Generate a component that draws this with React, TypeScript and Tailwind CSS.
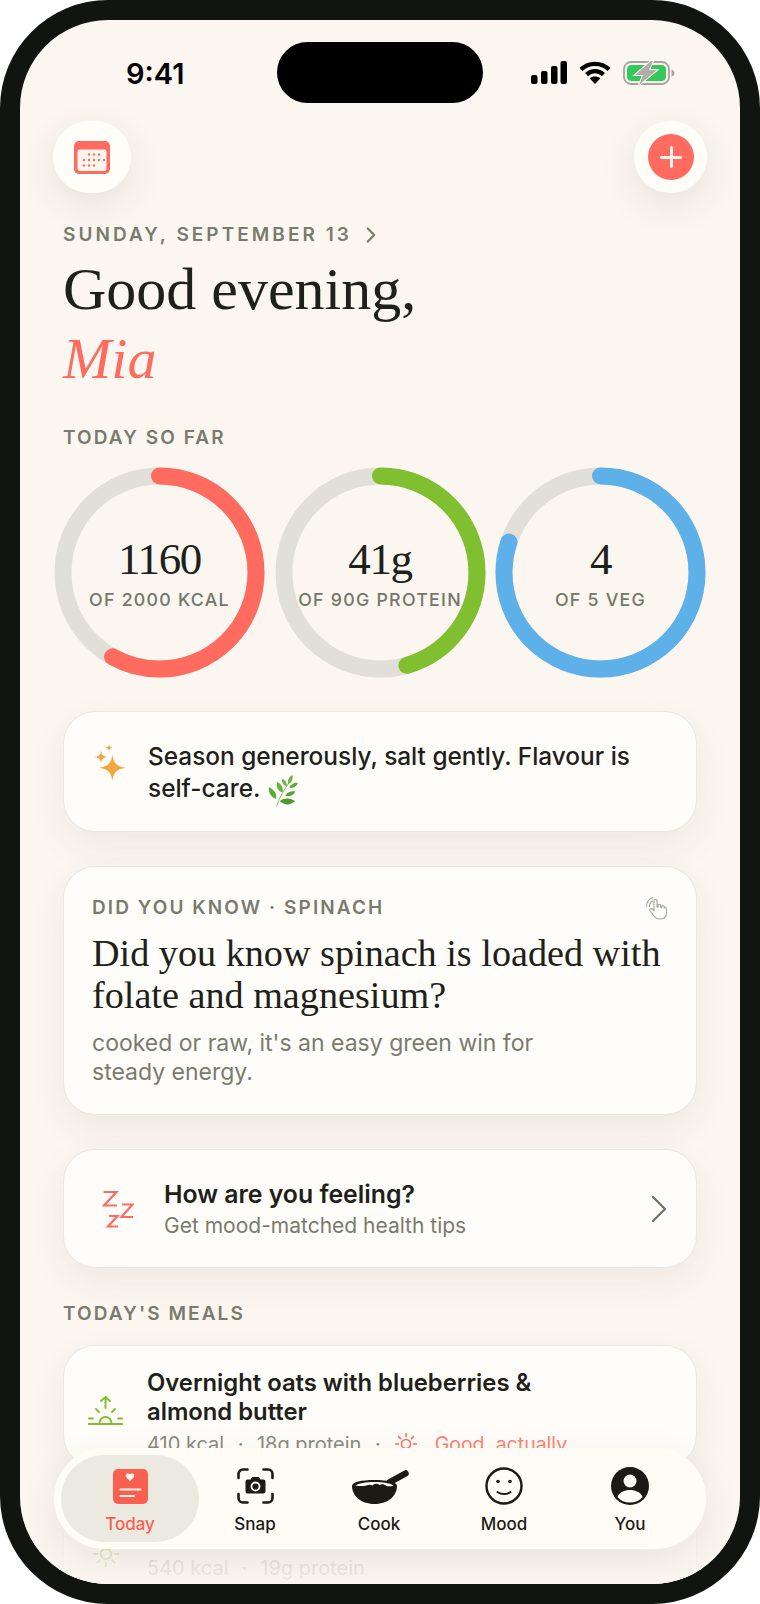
import React from 'react';
import { ChevronRight } from 'lucide-react';

const sans = 'font-["Inter","Liberation_Sans",sans-serif]';
const serif = 'font-["Liberation_Serif",serif]';

const rings = [
  { value: '1160', label: 'OF 2000 KCAL', pct: 0.58, color: '#FF6B5E' },
  { value: '41g', label: 'OF 90G PROTEIN', pct: 0.455, color: '#80BF2F' },
  { value: '4', label: 'OF 5 VEG', pct: 0.8, color: '#5EB0E9' },
];

function Ring({ value, label, pct, color }: { value: string; label: string; pct: number; color: string }) {
  const r = 96.5;
  const c = 2 * Math.PI * r;
  return (
    <div className="grid h-[211px] w-[211px] place-items-center [&>*]:[grid-area:1/1]">
      <svg width="211" height="211" viewBox="0 0 211 211" className="-rotate-90">
        <circle cx="105.5" cy="105.5" r={r} fill="none" stroke="#E2DFD8" strokeWidth="17" />
        <circle cx="105.5" cy="105.5" r={r} fill="none" stroke={color} strokeWidth="17" strokeLinecap="round" strokeDasharray={`${c * pct} ${c}`} />
      </svg>
      <div className="flex flex-col items-center pb-[1px]">
        <span className="font-['Liberation_Serif',serif] text-[45px] leading-[52px] tracking-[-0.03em] text-[#1E211A]">{value}</span>
        <span className="mt-[4px] text-[17.8px] leading-[22px] font-medium tracking-[0.07em] whitespace-nowrap text-[#74766A]">{label}</span>
      </div>
    </div>
  );
}

function SignalIcon() {
  return (
    <svg width="36" height="23" viewBox="0 0 36 23" fill="#000">
      <rect x="0" y="14" width="6.5" height="9" rx="2" />
      <rect x="10" y="10" width="6.5" height="13" rx="2" />
      <rect x="20" y="5" width="6.5" height="18" rx="2" />
      <rect x="29.5" y="0" width="6.5" height="23" rx="2" />
    </svg>
  );
}

function WifiIcon() {
  return (
    <svg width="32" height="23" viewBox="0 0 32 23" fill="none" stroke="#000" strokeWidth="4.4">
      <path d="M2 8.5C9.8 1 22.2 1 30 8.5" />
      <path d="M7.6 13.6C12.4 9 19.6 9 24.4 13.6" />
      <path d="M16 23l-5.4-5.8c3.1-2.4 7.7-2.4 10.8 0z" fill="#000" stroke="none" />
    </svg>
  );
}

function BatteryIcon() {
  return (
    <svg width="52" height="24" viewBox="0 0 52 24">
      <rect x="1" y="1" width="45" height="22" rx="7" fill="none" stroke="#A5A5A0" strokeWidth="1.8" />
      <rect x="4" y="4" width="39" height="16" rx="4.5" fill="#34C759" />
      <path d="M48.5 8.5c2 .5 3 2 3 3.500s-1 3-3 3.500z" fill="#A5A5A0" />
      <path d="M28 0 12 14h8l-4 10 18-15h-8l4-9z" fill="#B1AEA6" stroke="#FBF6F0" strokeWidth="2" paintOrder="stroke" />
    </svg>
  );
}

function CalendarIcon() {
  const dots = [
    [15, 13.5], [20, 13.5], [25, 13.5], [10, 19], [15, 19], [20, 19], [25, 19], [30, 19], [10, 24.5], [15, 24.5], [20, 24.5],
  ];
  return (
    <svg width="36" height="33" viewBox="0 0 36 33">
      <rect width="36" height="33" rx="5" fill="#FF6B5E" />
      <rect x="3.5" y="8.5" width="29" height="21.5" rx="2.5" fill="#FFF6F0" />
      {dots.map(([x, y]) => (
        <circle key={`${x}-${y}`} cx={x} cy={y} r="1.2" fill="#FF6B5E" />
      ))}
    </svg>
  );
}

function Sparkles() {
  return (
    <svg width="32" height="38" viewBox="0 0 32 38" fill="#F2A83C" className="-mt-[20px] shrink-0">
      <path d="M18.400 11.500c.9 8 3.800 11.800 13 13.200-9.200 1.400-12.100 5.200-13 13.300-.9-8.100-3.800-11.900-13-13.300 9.200-1.400 12.100-5.200 13-13.200z" />
      <path d="M7 7.500c.4 4 1.600 5.800 6.500 6.500-4.900.7-6.100 2.500-6.500 6.500-.4-4-1.600-5.800-6.500-6.500 4.900-.7 6.100-2.500 6.500-6.500z" />
      <path d="M15 1c.2 2.200 1 3.200 3.500 3.700-2.500.5-3.300 1.500-3.500 3.800-.2-2.300-1-3.300-3.500-3.800 2.500-.5 3.300-1.500 3.500-3.700z" />
    </svg>
  );
}

function HerbIcon() {
  return (
    <svg width="31" height="33" viewBox="44 0 94 100" className="-my-[6px] ml-[1px] inline-block align-[-4px]">
      <path d="M70 98C78 70 95 45 112 20" fill="none" stroke="#8DB765" strokeWidth="3" />
      <path d="M68 76C50 68 44 52 47 40c15 6 25 20 21 36z" fill="#5FAB38" />
      <path d="M88 56C72 50 68 36 72 24c12 6 20 18 16 32z" fill="#67B23E" />
      <path d="M100 38C88 32 84 22 88 14c10 6 15 14 12 24z" fill="#70B845" />
      <path d="M106 30c-4-10 2-22 12-27 3 11-2 22-12 27z" fill="#6AB240" />
      <path d="M108 42c6-12 17-17 27-15-5 11-15 17-27 15z" fill="#5FAB38" />
      <path d="M96 66c6-12 19-16 31-13-5 12-19 17-31 13z" fill="#57A233" />
      <path d="M80 82c12-10 30-10 46 0-14 14-32 14-46 0z" fill="#4E9A2C" />
    </svg>
  );
}

function TapIcon() {
  return (
    <svg width="24" height="24" viewBox="0 0 24 24" fill="none" stroke="#A3A49B" strokeWidth="1.1" strokeLinecap="round" strokeLinejoin="round" className="-mr-[2px]">
      <path d="M1.500 10.500C1.500 6 4.500 2.500 8 1.500" />
      <path d="M4.500 10.500C4.500 8 6 6 7.800 5" />
      <path d="M9 15V4.800c0-2 3-2 3 0V11l1 .1V9.500c0-1.500 2.700-1.500 2.700 0v2l1 .2v-1c0-1.400 2.600-1.400 2.600 0v1.200c.7-.9 2.200-.4 2.200 1v3.500c0 4-2.500 6.600-6.500 6.600-3 0-4.500-1-6-3l-4-5c-1-1.600 1-3.200 2.500-1.800z" />
    </svg>
  );
}

function ZzzIcon() {
  return (
    <svg width="32" height="38" viewBox="0 0 32 38" fill="none" stroke="#FF6B5E" strokeWidth="2.2" className="shrink-0">
      <path d="M1.500 2h13L2 15.500h13" />
      <path d="M20 14.500h10.500L19.500 27H31" />
      <path d="M7 26h8.500L6 36.500h10" />
    </svg>
  );
}

function SunriseIcon() {
  return (
    <svg width="35" height="29" viewBox="0 0 35 29" fill="none" stroke="#80BF2F" strokeWidth="1.9" strokeLinecap="round" className="shrink-0">
      <path d="M17.500 1v11M13 5l4.500-4L22 5" />
      <path d="M8 13l3 3M27 13l-3 3" />
      <path d="M11.500 27a6 6 0 0 1 12 0" />
      <path d="M1 22.500h4M30 22.500h4" />
      <path d="M0.500 28h34" />
    </svg>
  );
}

function SunSmall({ color, size = 24 }: { color: string; size?: number }) {
  return (
    <svg width={size} height={size} viewBox="0 0 24 24" fill="none" stroke={color} strokeWidth="1.6" strokeLinecap="round" className="shrink-0">
      <circle cx="12" cy="12" r="4.500" />
      <path d="M12 1.500v3M12 19.500v3M1.500 12h3M19.500 12h3M4.600 4.600l2 2M17.400 17.400l2 2M4.600 19.400l2-2M17.400 6.600l2-2" />
    </svg>
  );
}

function TodayIcon() {
  return (
    <svg width="35" height="35" viewBox="0 0 35 35">
      <rect width="35" height="35" rx="5" fill="#F9604F" />
      <path d="M13.500 8.500c-2-2.500.5-5 3-3.500.3.200.4.300.500.500.1-.2.200-.3.500-.5 2.500-1.500 5 1 3 3.500-1 1.200-2.300 2.500-3.500 3.500-1.200-1-2.500-2.300-3.500-3.500z" fill="#FFF6F0" />
      <rect x="6.500" y="19.500" width="22" height="2" rx="1" fill="#FFF6F0" />
      <rect x="6.500" y="26" width="15.500" height="2" rx="1" fill="#FFF6F0" />
    </svg>
  );
}

function SnapIcon() {
  return (
    <svg width="37" height="36" viewBox="0 0 37 36" fill="none">
      <path d="M1.500 10V6a4.500 4.500 0 0 1 4.500-4.500h4.500M26.500 1.500H31A4.500 4.500 0 0 1 35.500 6v4M35.500 26v4a4.500 4.500 0 0 1-4.500 4.500h-4.500M10.500 34.500H6A4.500 4.500 0 0 1 1.500 30v-4" stroke="#1D1A16" strokeWidth="2.600" strokeLinecap="round" />
      <path d="M10.500 11.500h3l1.500-2.500h7l1.500 2.500h3a2 2 0 0 1 2 2v10a2 2 0 0 1-2 2h-16a2 2 0 0 1-2-2v-10a2 2 0 0 1 2-2z" fill="#1D1A16" />
      <circle cx="18.500" cy="18.500" r="4" fill="#1D1A16" stroke="#FFFCF6" strokeWidth="1.800" />
    </svg>
  );
}

function CookIcon() {
  return (
    <svg width="62" height="36" viewBox="-4 -2 62 36">
      <path d="M38 12 53.500 3.500" stroke="#1D1A16" strokeWidth="6.500" strokeLinecap="round" />
      <path d="M0 16c0-4 9-6 22.500-6S45 12 45 16c0 9-8 18-22.500 18S0 25 0 16z" fill="#1D1A16" />
      <path d="M3.500 15.500c3-2.200 10-3.500 19-3.500s16 1.300 19 3.500c-2.500 1-4.500 1-7 .5-2-2-5-2.500-7-1-2-1.800-5-1.400-7 .4-2-1-4-.8-6 .1-3.500.8-7.500.8-11 0z" fill="#FFFCF6" />
    </svg>
  );
}

function MoodIcon() {
  return (
    <svg width="38" height="38" viewBox="0 0 38 38" fill="none" stroke="#1D1A16">
      <circle cx="19" cy="19" r="17.500" strokeWidth="2.400" />
      <circle cx="13" cy="14.500" r="1.800" fill="#1D1A16" stroke="none" />
      <circle cx="25" cy="14.500" r="1.800" fill="#1D1A16" stroke="none" />
      <path d="M12.500 25c3.500 2.800 9.500 2.800 13 0" strokeWidth="2" strokeLinecap="round" />
    </svg>
  );
}

function YouIcon() {
  return (
    <svg width="38" height="38" viewBox="0 0 38 38">
      <circle cx="19" cy="19" r="19" fill="#1D1A16" />
      <circle cx="19" cy="14" r="6.500" fill="#FFFCF6" />
      <path d="M6.500 30c2-5 7-7 12.500-7s10.500 2 12.500 7c-3 3.800-7.500 5.500-12.500 5.500S9.500 33.800 6.500 30z" fill="#FFFCF6" />
    </svg>
  );
}

const navItems = [
  { label: 'Today', icon: <TodayIcon />, active: true },
  { label: 'Snap', icon: <SnapIcon /> },
  { label: 'Cook', icon: <CookIcon /> },
  { label: 'Mood', icon: <MoodIcon /> },
  { label: 'You', icon: <YouIcon /> },
];

const card = 'rounded-[32px] border-[1.5px] border-[#E9E7E0] bg-[#FFFDF9] shadow-[0_14px_36px_rgba(70,60,40,0.07)]';

export default function App() {
  return (
    <div className={`h-[1604px] w-[760px] bg-white ${sans}`}>
      <div className="h-full rounded-[108px] bg-[#12140F] p-[20px]">
        <div className="relative h-full overflow-hidden rounded-[88px] bg-[#FBF6F0]">
          <div className="flex items-center pt-[22px] pl-[106px]">
            <span className="h-[61px] w-[151px] pt-[1px] text-[29px] leading-[61px] font-semibold text-black">9:41</span>
            <div className="h-[61px] w-[206px] rounded-full bg-black" />
            <div className="ml-[48px] flex items-center gap-[12px]">
              <SignalIcon />
              <WifiIcon />
              <BatteryIcon />
            </div>
          </div>

          <div className="mt-[18px] flex items-center justify-between px-[33px]">
            <button className="flex h-[72px] w-[78px] items-center justify-center rounded-full bg-[#FFFDF7] shadow-[0_12px_36px_rgba(70,60,40,0.1)]">
              <CalendarIcon />
            </button>
            <button className="flex h-[72px] w-[73px] items-center justify-center rounded-full bg-[#FFFDF7] shadow-[0_12px_36px_rgba(70,60,40,0.1)]">
              <span className="relative block h-[46px] w-[46px] rounded-full bg-[#FF6B5E]">
                <span className="absolute top-[22px] left-[12px] h-[3px] w-[22px] rounded-full bg-[#FFF6F0]" />
                <span className="absolute top-[12px] left-[22px] h-[22px] w-[3px] rounded-full bg-[#FFF6F0]" />
              </span>
            </button>
          </div>

          <div className="px-[43px]">
            <div className="mt-[29px] flex items-center gap-[6px] text-[19px] leading-[24px] font-semibold tracking-[0.16em] text-[#797B6D]">
              SUNDAY, SEPTEMBER 13
              <ChevronRight size={26} strokeWidth={2} />
            </div>
            <h1 className={`mt-[7px] text-[60px] leading-[69px] text-[#1E211A] ${serif}`}>Good evening,</h1>
            <div className={`text-[58px] leading-[70px] text-[#FF6B5E] italic ${serif}`}>Mia</div>
            <div className="mt-[32px] text-[19px] leading-[24px] font-semibold tracking-[0.11em] text-[#797B6D]">TODAY SO FAR</div>
          </div>

          <div className="mt-[17px] flex justify-between px-[34px]">
            {rings.map((ring) => (
              <Ring key={ring.label} {...ring} />
            ))}
          </div>

          <div className="px-[43px]">
            <div className={`mt-[33px] flex h-[121px] items-center gap-[22px] pr-[40px] pl-[30px] ${card}`}>
              <Sparkles />
              <p className="text-[24.4px] leading-[32px] font-medium text-[#1E211A]">
                Season generously, salt gently. Flavour is self-care. <HerbIcon />
              </p>
            </div>

            <div className={`mt-[34px] h-[249px] px-[28px] pt-[29px] ${card}`}>
              <div className="flex items-center justify-between pr-[1px]">
                <span className="text-[19px] leading-[24px] font-semibold tracking-[0.11em] text-[#797B6D]">DID YOU KNOW · SPINACH</span>
                <TapIcon />
              </div>
              <h2 className={`mt-[12px] text-[38.200px] leading-[42px] text-[#1E211A] ${serif}`}>
                Did you know spinach is loaded with folate and magnesium?
              </h2>
              <p className="mt-[13px] w-[480px] text-[23px] leading-[29px] text-[#797B6D]">
                cooked or raw, it's an easy green win for steady energy.
              </p>
            </div>

            <div className={`mt-[34px] flex h-[119px] items-center pr-[13px] pl-[38px] ${card}`}>
              <ZzzIcon />
              <div className="ml-[30px] flex-1">
                <div className="text-[24.8px] leading-[32px] font-semibold text-[#1E211A]">How are you feeling?</div>
                <div className="mt-[2px] text-[21px] leading-[28px] text-[#797B6D]">Get mood-matched health tips</div>
              </div>
              <ChevronRight size={48} strokeWidth={1.1} className="shrink-0 text-[#6F7066]" />
            </div>

            <div className="mt-[34px] text-[19px] leading-[24px] font-semibold tracking-[0.11em] text-[#797B6D]">TODAY'S MEALS</div>

            <div className={`mt-[19px] flex h-[122px] gap-[24px] pt-[22px] pr-[30px] pl-[24px] ${card}`}>
              <div className="pt-[28px]">
                <SunriseIcon />
              </div>
              <div className="w-[440px]">
                <div className="text-[23.800px] leading-[29px] font-semibold text-[#1E211A]">
                  Overnight oats with blueberries &amp; almond butter
                </div>
                <div className="mt-[4px] flex items-center gap-[13.500px] text-[20px] leading-[28px] whitespace-nowrap text-[#8A8B80]">
                  <span>410 kcal</span>
                  <span>·</span>
                  <span>18g protein</span>
                  <span>·</span>
                  <SunSmall color="#FF6B5E" />
                  <span className="ml-[3px] text-[19.500px] text-[#FF8175]">Good, actually</span>
                </div>
              </div>
            </div>

            <div className={`mt-[35px] flex h-[122px] gap-[27px] pt-[37px] pr-[30px] pl-[28px] ${card}`}>
              <SunSmall color="#80BF2F" size={28} />
              <div className="mt-[14px] flex h-[28px] gap-[13px] text-[20px] leading-[28px] text-[#8A8B80]">
                <span>540 kcal</span>
                <span>·</span>
                <span>19g protein</span>
              </div>
            </div>
          </div>

          <div className="absolute inset-x-0 bottom-0 h-[110px] bg-gradient-to-b from-[#FBF6F0]/0 via-[#FBF6F0]/70 to-[#FBF6F0]/90" />

          <nav className="absolute top-[1428px] left-[34px] grid h-[101px] w-[652px] grid-cols-[138px_112px_136px_114px_138px] rounded-[50px] bg-[#FFFCF6] p-[7px] shadow-[0_12px_36px_rgba(70,60,40,0.1)]">
            {navItems.map((item) => (
              <div key={item.label} className={`flex flex-col items-center justify-between pt-[12px] pb-[7px] ${item.active ? 'rounded-[44px] bg-[#ECE9E1] text-[#F9604F]' : 'text-[#1D1A16]'}`}>
                <div className="flex h-[38px] items-center">{item.icon}</div>
                <span className="text-[17px] leading-[22px] font-medium">{item.label}</span>
              </div>
            ))}
          </nav>
        </div>
      </div>
    </div>
  );
}
